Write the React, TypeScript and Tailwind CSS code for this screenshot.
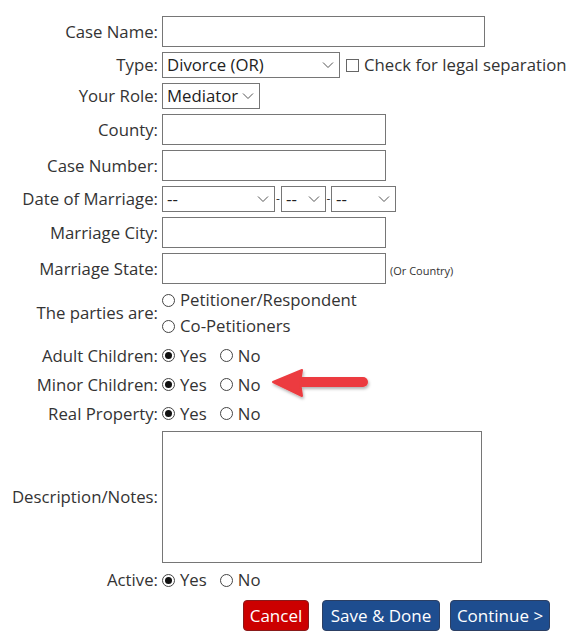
import React from "react";

const font = { fontFamily: '"Open Sans", "Liberation Sans", sans-serif' };

function Chevron() {
  return (
    <svg width="12" height="8" viewBox="0 0 12 8" className="shrink-0">
      <path d="M1 1.5 L6 6.5 L11 1.5" fill="none" stroke="#555" strokeWidth="1" />
    </svg>
  );
}

function Select({ value, width }: { value: string; width: string }) {
  return (
    <div className={`flex h-[26px] items-center justify-between border border-[#767676] bg-white pl-[4px] pr-[5px] text-[16.75px] text-[#222] ${width}`}>
      <span className="leading-none">{value}</span>
      <Chevron />
    </div>
  );
}

function TextBox({ width }: { width: string }) {
  return <div className={`h-[31px] border border-[#767676] bg-white ${width}`} />;
}

function Radio({ checked, label }: { checked?: boolean; label: string }) {
  return (
    <span className="flex items-center">
      <span className="flex h-[13px] w-[13px] items-center justify-center rounded-full border border-[#444] bg-white">
        {checked && <span className="h-[7px] w-[7px] rounded-full bg-[#111]" />}
      </span>
      <span className="ml-[5px]">{label}</span>
    </span>
  );
}

function YesNo({ yes = true }: { yes?: boolean }) {
  return (
    <div className="flex items-center gap-[13px]">
      <Radio checked={yes} label="Yes" />
      <Radio checked={!yes} label="No" />
    </div>
  );
}

function Row({ label, children, className = "" }: { label: string; children: React.ReactNode; className?: string }) {
  return (
    <div className={`flex items-center ${className}`}>
      <div className="w-[158px] shrink-0 whitespace-nowrap text-right">{label}</div>
      <div className="ml-[4px] flex items-center">{children}</div>
    </div>
  );
}

export default function App() {
  return (
    <div className="h-[642px] w-[570px] bg-white pt-[16px] text-[16.75px] leading-[22px] text-[#333]" style={font}>
      <div className="flex flex-col">
        <Row label="Case Name:">
          <TextBox width="w-[323px]" />
        </Row>
        <Row label="Type:" className="mt-[5px]">
          <Select value="Divorce (OR)" width="w-[178px]" />
          <span className="ml-[6px] h-[13px] w-[13px] border border-[#666] bg-white" />
          <span className="ml-[5px] whitespace-nowrap">Check for legal separation</span>
        </Row>
        <Row label="Your Role:" className="mt-[5px]">
          <Select value="Mediator" width="w-[98px]" />
        </Row>
        <Row label="County:" className="mt-[5px]">
          <TextBox width="w-[224px]" />
        </Row>
        <Row label="Case Number:" className="mt-[5px]">
          <TextBox width="w-[224px]" />
        </Row>
        <Row label="Date of Marriage:" className="mt-[5px]">
          <Select value="--" width="w-[113px]" />
          <span className="w-[6px] text-center text-[12px]">-</span>
          <Select value="--" width="w-[45px]" />
          <span className="w-[5px] text-center text-[12px]">-</span>
          <Select value="--" width="w-[65px]" />
        </Row>
        <Row label="Marriage City:" className="mt-[5px]">
          <TextBox width="w-[224px]" />
        </Row>
        <Row label="Marriage State:" className="mt-[5px]">
          <TextBox width="w-[224px]" />
          <span className="ml-[4px] mt-[4px] text-[11px]">(Or Country)</span>
        </Row>
        <Row label="The parties are:" className="mt-[3px]">
          <div className="flex flex-col">
            <div className="flex h-[26px] items-center">
              <Radio label="Petitioner/Respondent" />
            </div>
            <div className="flex h-[26px] items-center">
              <Radio label="Co-Petitioners" />
            </div>
          </div>
        </Row>
        <Row label="Adult Children:" className="h-[29px] mt-[2px]">
          <YesNo />
        </Row>
        <div className="relative">
          <Row label="Minor Children:" className="h-[29px]">
            <YesNo />
          </Row>
          <svg className="absolute left-[270px] top-[-3px]" width="104" height="36" viewBox="0 0 104 36">
            <defs>
              <filter id="sh" x="-10%" y="-30%" width="130%" height="170%">
                <feDropShadow dx="1" dy="2" stdDeviation="1.5" floodColor="#000" floodOpacity="0.3" />
              </filter>
            </defs>
            <g filter="url(#sh)">
              <line x1="28" y1="15" x2="93" y2="15" stroke="#ec3b3f" strokeWidth="10" strokeLinecap="round" />
              <path d="M3 15 L32 3 L30 15 L32 29 Z" fill="#ec3b3f" stroke="#ec3b3f" strokeWidth="2" strokeLinejoin="round" />
            </g>
          </svg>
        </div>
        <Row label="Real Property:" className="h-[29px]">
          <YesNo />
        </Row>
        <Row label="Description/Notes:" className="mt-[3px]">
          <div className="h-[132px] w-[320px] border border-[#767676] bg-white" />
        </Row>
        <Row label="Active:" className="mt-[3px] h-[28px]">
          <YesNo />
        </Row>
        <div className="ml-[243px] mt-[6px] flex items-center">
          <div className="flex h-[31px] w-[66px] items-center justify-center rounded-[4px] border border-[#8a1a1a] bg-[#cc0000] text-[17px] text-white">
            Cancel
          </div>
          <div className="ml-[13px] flex h-[31px] w-[118px] items-center justify-center rounded-[4px] border border-[#2c3f63] bg-[#1e4d8f] text-[17px] text-white">
            Save &amp; Done
          </div>
          <div className="ml-[10px] flex h-[31px] w-[100px] items-center justify-center rounded-[4px] border border-[#2c3f63] bg-[#1e4d8f] text-[17px] text-white">
            Continue &gt;
          </div>
        </div>
      </div>
    </div>
  );
}
